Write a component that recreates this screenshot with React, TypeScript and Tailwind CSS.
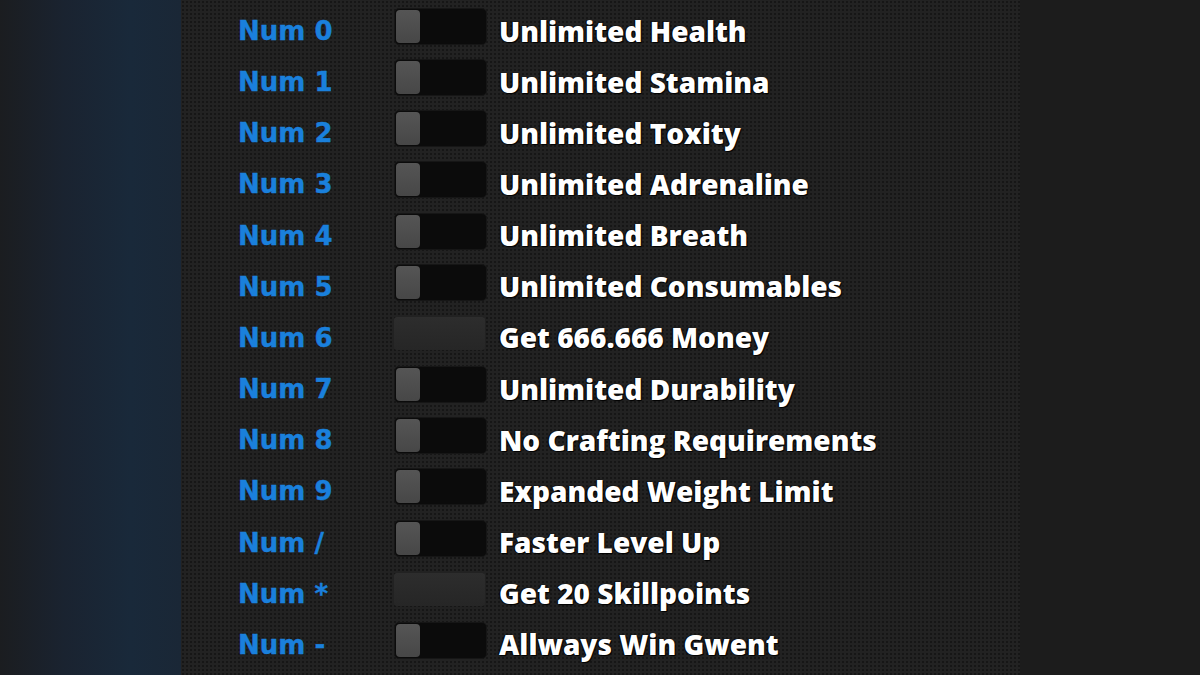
import React from 'react';

interface Cheat {
    key: string;
    label: string;
    toggle: boolean;
}

const cheats: Cheat[] = [
    { key: 'Num 0', label: 'Unlimited Health', toggle: true },
    { key: 'Num 1', label: 'Unlimited Stamina', toggle: true },
    { key: 'Num 2', label: 'Unlimited Toxity', toggle: true },
    { key: 'Num 3', label: 'Unlimited Adrenaline', toggle: true },
    { key: 'Num 4', label: 'Unlimited Breath', toggle: true },
    { key: 'Num 5', label: 'Unlimited Consumables', toggle: true },
    { key: 'Num 6', label: 'Get 666.666 Money', toggle: false },
    { key: 'Num 7', label: 'Unlimited Durability', toggle: true },
    { key: 'Num 8', label: 'No Crafting Requirements', toggle: true },
    { key: 'Num 9', label: 'Expanded Weight Limit', toggle: true },
    { key: 'Num /', label: 'Faster Level Up', toggle: true },
    { key: 'Num *', label: 'Get 20 Skillpoints', toggle: false },
    { key: 'Num -', label: 'Allways Win Gwent', toggle: true },
];

function Switch({ toggle }: { toggle: boolean }) {
    if (!toggle) {
        // one-shot actions just get a flat button
        return (
            <div className="w-[91px] h-[33px] rounded-[3px] bg-gradient-to-b from-[#2d2d2d] to-[#262626]" />
        );
    }
    return (
        <div className="w-[93px] h-[37px] rounded-[5px] bg-[#0b0b0b] border border-[#161616] flex items-stretch p-[1px]">
            <div className="w-[24px] rounded-[4px] bg-gradient-to-b from-[#555] to-[#474747]" />
        </div>
    );
}

export default function App() {
    return (
        <div className="w-[1200px] h-[675px] flex overflow-hidden bg-[#1c1c1c]">
            <div className="w-[181px] h-full bg-[linear-gradient(90deg,#1b1d20_0%,#1a2330_35%,#19293a_72%,#1a2736_100%)]" />
            <div className="w-[839px] h-full bg-[#222222] bg-[radial-gradient(circle,#161616_1px,transparent_1.3px)] bg-[length:4px_4px] pt-[8px] pl-[57px]">
                <ul className="flex flex-col">
                    {cheats.map((cheat) => (
                        <li key={cheat.key} className="h-[51.17px] flex items-start">
                            <span className="w-[156px] h-[37px] flex items-center text-[26px] font-bold text-[#1a80dc] font-['DejaVu_Sans',sans-serif] mt-[5px] [-webkit-text-stroke:0.4px_#1a80dc]">
                                {cheat.key}
                            </span>
                            <div className="h-[37px] w-[93px] flex items-center">
                                <Switch toggle={cheat.toggle} />
                            </div>
                            <span className="ml-[12px] h-[37px] flex items-center text-[28px] font-extrabold text-white font-['Open_Sans',sans-serif] [text-shadow:1px_1px_1px_#000,-1px_0_1px_#000] mt-[4px]">
                                {cheat.label}
                            </span>
                        </li>
                    ))}
                </ul>
            </div>
            <div className="flex-1 h-full bg-[#1c1c1c]" />
        </div>
    );
}
